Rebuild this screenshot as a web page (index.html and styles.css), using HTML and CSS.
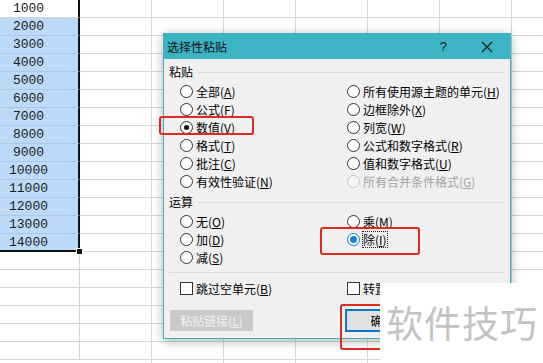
FILE: index.html
```html
<!DOCTYPE html>
<html lang="zh-CN">
<head>
    <meta charset="UTF-8">
    <title>选择性粘贴</title>
    <link rel="stylesheet" href="styles.css">
</head>
<body>
    <!-- bảng tính phía sau -->
    <div class="sheet">
        <div class="col-a">
            <div class="selection">
                <div class="cell active">1000</div>
                <div class="cell">2000</div>
                <div class="cell">3000</div>
                <div class="cell">4000</div>
                <div class="cell">5000</div>
                <div class="cell">6000</div>
                <div class="cell">7000</div>
                <div class="cell">8000</div>
                <div class="cell">9000</div>
                <div class="cell">10000</div>
                <div class="cell">11000</div>
                <div class="cell">12000</div>
                <div class="cell">13000</div>
                <div class="cell last">14000</div>
            </div>
            <div class="cell empty"></div>
            <div class="cell empty"></div>
            <div class="cell empty"></div>
            <div class="cell empty"></div>
            <div class="cell empty"></div>
            <div class="cell empty"></div>
        </div>
        <div class="grid"></div>
    </div>

    <!-- hộp thoại -->
    <div class="dialog">
        <div class="titlebar">
            <span class="title">选择性粘贴</span>
            <span class="help">?</span>
            <span class="close">
                <svg width="12" height="12" viewBox="0 0 12 12"><path d="M1 1 L11 11 M11 1 L1 11" stroke="#1a1a1a" stroke-width="1.1" fill="none"/></svg>
            </span>
        </div>
        <div class="body">
            <div class="group">粘贴</div>
            <div class="options">
                <div class="opt"><span class="radio"></span>全部<span class="key">(<u>A</u>)</span></div>
                <div class="opt"><span class="radio"></span>所有使用源主题的单元<span class="key">(<u>H</u>)</span></div>
                <div class="opt"><span class="radio"></span>公式<span class="key">(<u>F</u>)</span></div>
                <div class="opt"><span class="radio"></span>边框除外<span class="key">(<u>X</u>)</span></div>
                <div class="opt"><span class="radio checked"></span>数值<span class="key">(<u>V</u>)</span></div>
                <div class="opt"><span class="radio"></span>列宽<span class="key">(<u>W</u>)</span></div>
                <div class="opt"><span class="radio"></span>格式<span class="key">(<u>T</u>)</span></div>
                <div class="opt"><span class="radio"></span>公式和数字格式<span class="key">(<u>R</u>)</span></div>
                <div class="opt"><span class="radio"></span>批注<span class="key">(<u>C</u>)</span></div>
                <div class="opt"><span class="radio"></span>值和数字格式<span class="key">(<u>U</u>)</span></div>
                <div class="opt"><span class="radio"></span>有效性验证<span class="key">(<u>N</u>)</span></div>
                <div class="opt disabled"><span class="radio"></span>所有合并条件格式<span class="key">(<u>G</u>)</span></div>
            </div>

            <div class="group">运算</div>
            <div class="options">
                <div class="opt"><span class="radio"></span>无<span class="key">(<u>O</u>)</span></div>
                <div class="opt"><span class="radio"></span>乘<span class="key">(<u>M</u>)</span></div>
                <div class="opt"><span class="radio"></span>加<span class="key">(<u>D</u>)</span></div>
                <div class="opt"><span class="radio focus"></span><span class="focus-text">除<span class="key">(<u>I</u>)</span></span></div>
                <div class="opt"><span class="radio"></span>减<span class="key">(<u>S</u>)</span></div>
                <div class="opt"></div>
            </div>

            <div class="rule"></div>

            <div class="options checks">
                <div class="opt"><span class="check"></span>跳过空单元<span class="key">(<u>B</u>)</span></div>
                <div class="opt"><span class="check"></span>转置<span class="key">(<u>E</u>)</span></div>
            </div>

            <div class="buttons">
                <button class="btn btn-disabled">粘贴链接<span class="key">(<u>L</u>)</span></button>
                <button class="btn btn-default">确定</button>
            </div>
        </div>
    </div>

    <!-- khung đỏ đánh dấu -->
    <div class="mark mark-value"></div>
    <div class="mark mark-divide"></div>
    <div class="mark mark-ok"></div>

    <div class="watermark">软件技巧</div>
</body>
</html>
```

FILE: styles.css
```css
body {
    margin: 0;
    width: 543px;
    height: 363px;
    overflow: hidden;
    position: relative;
    background: #fff;
    font-family: "Noto Sans CJK SC", "Liberation Sans", sans-serif;
    font-size: 12px;
    color: #000;
}
.sheet {
    display: flex;
    height: 363px;
}
.col-a {
    width: 80px;
    flex: none;
}
.cell {
    box-sizing: border-box;
    height: 18px;
    width: 80px;
    padding-right: 21px;
    border-bottom: 1px solid #a9c8ea;
    border-right: 1px solid #d4d4d4;
    text-align: center;
    font-family: "Liberation Mono", monospace;
    font-size: 13px;
    line-height: 18px;
    color: #1a1a1a;
    background: #bcdaf7;
}
.cell.active {
    background: #fff;
    border-bottom-color: #d4d4d4;
}
.cell.empty {
    background: #fff;
    border-bottom-color: #d4d4d4;
}
.selection {
    position: relative;
}
.selection .cell {
    border-right: 2px solid #111;
}
.selection .cell.last {
    border-bottom: 2px solid #111;
    line-height: 17px;
}
.selection::after {
    content: "";
    position: absolute;
    right: -3px;
    bottom: -3px;
    width: 5px;
    height: 5px;
    background: #111;
    border: 1px solid #fff;
}
.grid {
    flex: 1;
    background-image:
        linear-gradient(to bottom, transparent 17px, #d6d6d6 17px),
        linear-gradient(to right, transparent 71px, #d6d6d6 71px);
    background-size: 100% 18px, 72px 100%;
}

/* hộp thoại */
.dialog {
    position: absolute;
    left: 163px;
    top: 33px;
    width: 348px;
    height: 306px;
    box-sizing: border-box;
    border: 1px solid #3bb3c3;
    background: #f0f0f0;
    box-shadow: 0 2px 10px rgba(0, 0, 0, 0.3);
}
.titlebar {
    height: 25px;
    background: #3cb4c4;
    display: flex;
    align-items: center;
    padding-left: 3px;
}
.title {
    flex: 1;
    color: #111;
}
.help {
    font-family: "Liberation Sans", sans-serif;
    font-size: 13px;
    color: #1a1a1a;
    margin-right: 34px;
}
.close {
    display: flex;
    margin-right: 17px;
}
.body {
    padding: 4px 6px 0 5px;
}
.group {
    display: flex;
    align-items: center;
    height: 18px;
    line-height: 18px;
}
.group::after {
    content: "";
    flex: 1;
    height: 1px;
    background: #dadada;
    margin-left: 5px;
}
.options {
    display: grid;
    grid-template-columns: 167px 1fr;
    padding-left: 11px;
    margin: 1px 0 3px;
}
.opt {
    display: flex;
    align-items: center;
    height: 18px;
    white-space: nowrap;
}
.opt.disabled {
    color: #a3a3a3;
}
.key u {
    text-decoration-thickness: 1px;
    text-underline-offset: 1px;
}
.radio {
    box-sizing: border-box;
    width: 13px;
    height: 13px;
    border: 1px solid #333;
    border-radius: 50%;
    background: #fff;
    margin-right: 3px;
    display: flex;
    align-items: center;
    justify-content: center;
}
.disabled .radio {
    border-color: #c6c6c6;
    background: #f5f5f5;
}
.radio.checked::after {
    content: "";
    width: 5px;
    height: 5px;
    border-radius: 50%;
    background: #111;
}
.radio.focus {
    border-color: #0078d7;
}
.radio.focus::after {
    content: "";
    width: 7px;
    height: 7px;
    border-radius: 50%;
    background: #1a7fd4;
}
.focus-text {
    outline: 1px dotted #222;
    line-height: 15px;
}
.rule {
    height: 1px;
    background: #dadada;
    margin: 6px 0 6px;
}
.checks {
    margin: 0;
}
.check {
    box-sizing: border-box;
    width: 13px;
    height: 13px;
    border: 1px solid #333;
    background: #fff;
    margin-right: 3px;
}
.buttons {
    display: flex;
    margin-top: 13px;
    padding-left: 1px;
}
.btn {
    font-family: "Noto Sans CJK SC", sans-serif;
    font-size: 12px;
    height: 21px;
    padding: 0;
    line-height: 19px;
}
.btn-disabled {
    width: 83px;
    background: #cacaca;
    color: #f2f2f2;
    border: 1px solid #cacaca;
}
.btn-default {
    width: 75px;
    margin-left: 92px;
    background: #e1e1e1;
    color: #000;
    border: 2px solid #0a76c9;
    margin-top: -1px;
    height: 23px;
}

/* khung đỏ */
.mark {
    position: absolute;
    border: 2.5px solid #dc2a20;
    border-radius: 3px;
}
.mark-value {
    left: 159px;
    top: 116px;
    width: 91px;
    height: 15px;
}
.mark-divide {
    left: 320px;
    top: 227px;
    width: 96px;
    height: 24px;
}
.mark-ok {
    left: 340px;
    top: 304px;
    width: 80px;
    height: 42px;
}
.watermark {
    position: absolute;
    left: 380px;
    top: 283px;
    width: 163px;
    height: 80px;
    background: #fff;
    box-sizing: border-box;
    padding-left: 6px;
    font-family: "Noto Sans CJK SC", sans-serif;
    font-size: 37px;
    line-height: 78px;
    color: #c3c3c3;
    letter-spacing: 1px;
}
```
